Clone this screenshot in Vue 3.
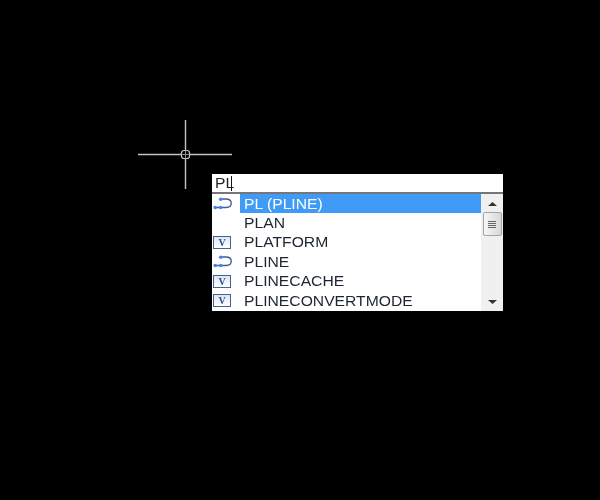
<template>
  <div class="canvas">
    <svg class="cursor" width="96" height="70" viewBox="0 0 96 70">
      <path d="M0 34.5H43M52 34.5H94M47.5 0V30M47.5 39V69" stroke="#c4c4c4" stroke-width="1.4" fill="none" />
      <rect x="43.5" y="30.5" width="8" height="8" rx="2.5" stroke="#c4c4c4" stroke-width="1.2" fill="none" />
      <path d="M43.5 34.5H51.5M47.5 30.5V38.5" stroke="#8a8a8a" stroke-width="1" fill="none" />
    </svg>

    <div class="popup">
      <div class="input"><span class="stretch">PL</span><span class="caret"></span></div>
      <div class="panel">
        <ul class="list">
          <li v-for="item in items" :key="item.name" class="row" :class="{ active: item.active }">
            <span class="icon">
              <svg v-if="item.type === 'cmd'" width="20" height="14" viewBox="0 0 20 14">
                <path d="M8 2H13C20 2 20 10.5 13 10.5H3" stroke="#3a5a9c" stroke-width="1.3" fill="none" />
                <circle cx="7.7" cy="2.2" r="1.8" fill="#4a86e8" />
                <circle cx="2.2" cy="10.5" r="1.8" fill="#4a86e8" />
                <circle cx="7.7" cy="10.5" r="1.8" fill="#4a86e8" />
              </svg>
              <span v-else-if="item.type === 'var'" class="var">V</span>
            </span>
            <span class="label"><span class="stretch">{{ item.name }}</span></span>
          </li>
        </ul>
        <div class="scrollbar">
          <svg class="arrow" width="9" height="4" viewBox="0 0 9 4"><path d="M4.5 0L9 4H0Z" fill="#333" /></svg>
          <div class="thumb">
            <span></span><span></span><span></span><span></span>
          </div>
          <div class="track"></div>
          <svg class="arrow" width="9" height="4" viewBox="0 0 9 4"><path d="M0 0H9L4.5 4Z" fill="#333" /></svg>
        </div>
      </div>
    </div>
  </div>
</template>

<script setup>
const items = [
  { name: "PL (PLINE)", type: "cmd", active: true },
  { name: "PLAN", type: "" },
  { name: "PLATFORM", type: "var" },
  { name: "PLINE", type: "cmd" },
  { name: "PLINECACHE", type: "var" },
  { name: "PLINECONVERTMODE", type: "var" },
];
</script>

<style>
html,
body {
  background: #000;
}
</style>

<style scoped>
.canvas {
  position: relative;
  width: 600px;
  height: 500px;
  background: #000;
  overflow: hidden;
  font-family: "Liberation Sans", Arial, sans-serif;
}

.cursor {
  position: absolute;
  left: 138px;
  top: 120px;
}

.popup {
  position: absolute;
  left: 212px;
  top: 174px;
  width: 291px;
  filter: blur(0.3px);
}

/* the reference is horizontally stretched */
.stretch {
  display: inline-block;
  white-space: nowrap;
  transform: scaleX(1.12);
  transform-origin: left center;
}

.input {
  display: flex;
  align-items: center;
  height: 18px;
  padding-left: 3px;
  background: #fff;
  color: #222;
  font-size: 14px;
}

.input .stretch {
  width: 16px;
}

.caret {
  width: 1px;
  height: 15px;
  background: #111;
}

.panel {
  display: flex;
  height: 117px;
  background: #fff;
  border-top: 2px solid #777;
}

.list {
  flex: 1;
  margin: 0;
  padding: 0;
  list-style: none;
}

.row {
  display: flex;
  align-items: center;
  height: 19.4px;
  font-size: 14px;
  line-height: 18px;
  color: #1c2530;
}

.icon {
  display: flex;
  align-items: center;
  width: 28px;
  padding-left: 1px;
  box-sizing: border-box;
  flex: none;
}

.label {
  flex: 1;
  align-self: stretch;
  display: flex;
  align-items: center;
  padding-left: 4px;
}

.active .label {
  background: #3f9bf5;
  color: #fff;
}

.var {
  display: flex;
  align-items: center;
  justify-content: center;
  width: 16px;
  height: 11px;
  border: 1.5px solid #46628f;
  background: linear-gradient(#dce6f2, #fff);
  color: #2c4f8c;
  font: bold 10px "Liberation Serif", serif;
}

.scrollbar {
  display: flex;
  flex-direction: column;
  align-items: center;
  width: 22px;
  background: #f0f0f0;
  padding: 8px 0 7px;
  box-sizing: border-box;
}

.arrow {
  flex: none;
}

.thumb {
  display: flex;
  flex-direction: column;
  align-items: center;
  justify-content: center;
  gap: 1px;
  width: 17px;
  height: 22px;
  margin-top: 6px;
  border: 1px solid #a5a5a5;
  border-radius: 2px;
  background: linear-gradient(90deg, #f6f6f6, #d8d8d8);
}

.thumb span {
  width: 8px;
  height: 1px;
  background: #666;
}

.track {
  flex: 1;
}
</style>
